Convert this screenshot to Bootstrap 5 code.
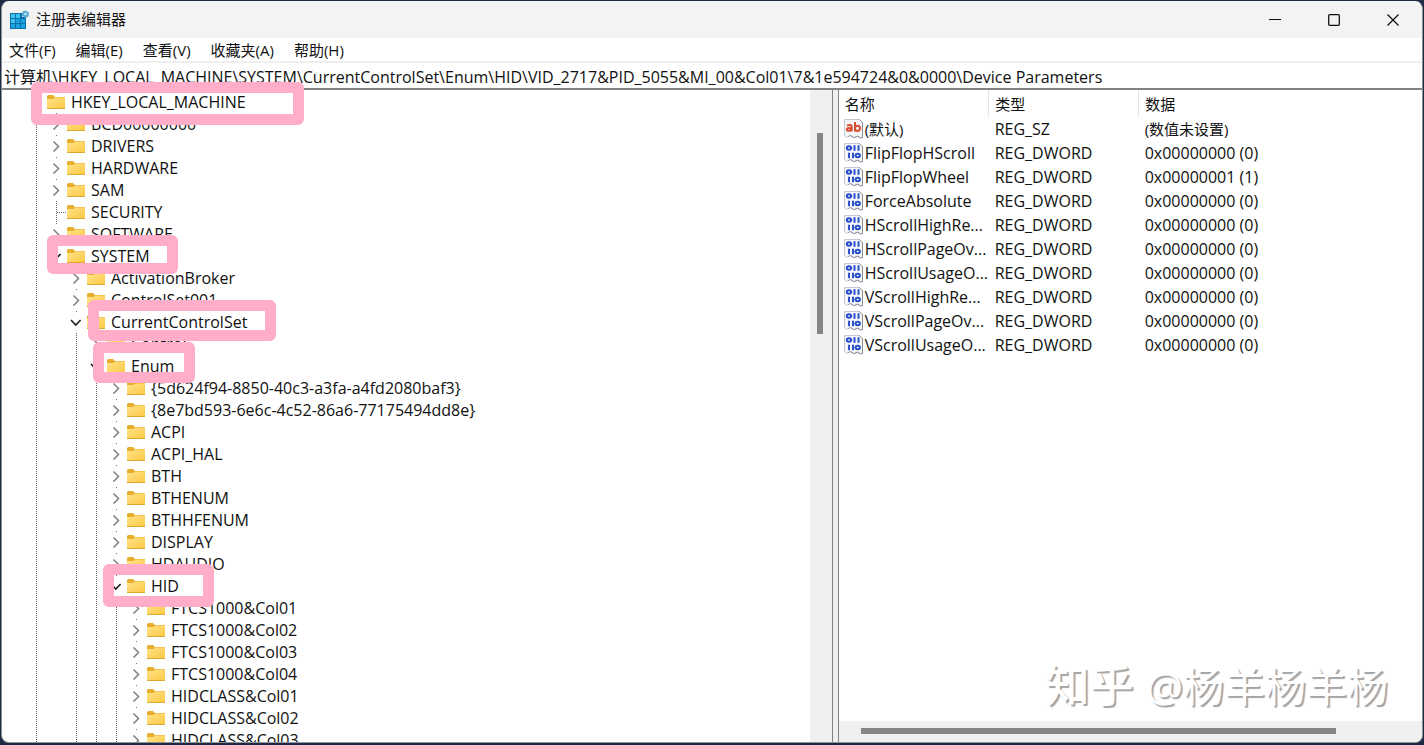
<!DOCTYPE html>
<html lang="zh-CN">
<head>
<meta charset="utf-8">
<meta name="viewport" content="width=device-width, initial-scale=1">
<title>注册表编辑器</title>
<link href="https://cdn.jsdelivr.net/npm/bootstrap@5.3.0/dist/css/bootstrap.min.css" rel="stylesheet">
<style>
  body { font: 16px/22px "Open Sans", "Noto Sans CJK SC", sans-serif; color: #111; background: #1c2a44; }
  .desk { height: 100vh; padding: 1px 1px 2px; }
  .reg-window { background: #fff; border-radius: 8px; overflow: hidden; border: 1px solid #8f9298; border-top-color: #f3f3f3; }
  .cjk { font-size: 15px; }
  .title-bar { height: 36px; background: #f3f3f3; }
  .app-name { padding-left: 6px; line-height: 20px; padding-bottom: 2px; }
  .win-btn { width: 59px; height: 36px; border: 0; background: none; padding: 0; display: grid; place-items: center; }
  .menu-bar { height: 25px; gap: 20px; padding-left: 7px; border-bottom: 2px solid #efefef; }
  .menu-bar a { color: #111; text-decoration: none; }
  .address-bar { height: 27px; border: 0; border-bottom: 2px solid #828282; padding: 0 2px; color: #111; outline: 0; }
  .tree-pane { flex: 0 0 58.5%; border-right: 1px solid #828282; overflow: hidden; }
  .split-bar { flex: 0 0 5px; background: #f0f0f0; }
  .value-pane { flex: 1 1 0; min-width: 0; border-left: 1px solid #828282; }
  .v-track { flex: 0 0 22px; background: #f0f0f0; padding: 43px 9px 0 7px; }
  .v-thumb { height: 201px; background: #858585; }
  .h-track { height: 21px; background: #f0f0f0; padding: 7px 86px 0 22px; }
  .h-thumb { height: 6px; background: #858585; }
  .tree { list-style: none; margin: 0; padding: 1px 0 0 25px; }
  .tree li { display: flex; align-items: center; height: 22px; white-space: nowrap; }
  .guide { flex: 0 0 20px; height: 22px; display: grid; align-items: center; padding-left: 3px; background-repeat: no-repeat; background-position: 9px 0; background-size: 1px 100%; }
  .guide.rail { background-image: repeating-linear-gradient(#666 0 1px, transparent 1px 2px); }
  .guide.node { background-image: linear-gradient(#777, #777); background-size: 1px 1px; }
  .guide.leaf { background-image: repeating-linear-gradient(#666 0 1px, transparent 1px 2px), repeating-linear-gradient(90deg, #666 0 1px, transparent 1px 2px); background-size: 1px 100%, 9px 1px; background-position: 9px 0, 10px 11px; }
  .folder { flex: 0 0 20px; margin-right: 4px; }
  .frame { position: absolute; border: 11px solid #ffadc8; border-radius: 6px; }
  .frame-hklm { left: 29px; top: 80px; width: 273px; height: 43px; }
  .frame-system { left: 45px; top: 233px; width: 131px; height: 39px; }
  .frame-ccs { left: 86px; top: 298px; width: 188px; height: 41px; }
  .frame-enum { left: 91px; top: 340px; width: 102px; height: 41px; }
  .frame-hid { left: 101px; top: 562px; width: 111px; height: 43px; }
  .values { table-layout: fixed; width: 100%; border-collapse: collapse; }
  .values th { font-weight: 400; height: 27px; padding: 0 6px; border-right: 1px solid #e4e4e4; }
  .values th:last-child { border-right: 0; }
  .values td { height: 24px; padding: 0 6px; white-space: nowrap; }
  .values td:first-child { padding: 0 0 0 5px; }
  .values svg { margin-right: 2px; flex: none; }
  .watermark { right: 34px; bottom: 26px; font-size: 41px; line-height: 60px; color: #fff; text-shadow: 2px 2px 1px #a4a4a4; }
  .watermark b { font-size: 44px; font-weight: 500; margin-right: 2px; }
</style>
</head>
<body>
<svg width="0" height="0" class="position-absolute" aria-hidden="true">
  <defs>
    <linearGradient id="fold" x1="0" y1="0" x2="1" y2="1"><stop offset="0" stop-color="#ffe38a"/><stop offset="1" stop-color="#fbc843"/></linearGradient>
    <symbol id="i-folder" viewBox="0 0 20 16">
      <path d="M0 2.500Q0 1 1.500 1H6l2 2h10v4H0z" fill="#e6ae2c"/>
      <path d="M0 5h6.500l1.500-1.500h10V15H0z" fill="url(#fold)"/>
      <path d="M0 14.500h18" stroke="#e0a832"/>
    </symbol>
    <symbol id="i-right" viewBox="0 0 12 12"><path d="M3.500 1.500l5 5-5 5" fill="none" stroke="#858585" stroke-width="1.600"/></symbol>
    <symbol id="i-down" viewBox="0 0 12 12"><path d="M1 4l4.800 5L10.600 4" fill="none" stroke="#222" stroke-width="1.700"/></symbol>
    <symbol id="i-page" viewBox="0 0 19 20">
      <path d="M.5.5h15l3 3v15q-2 1-3.500-.500t-3.500 0-3.500-.500-3.500 0-4-1z" fill="#f4f6fa" stroke="#c3c7cf"/>
      <path d="M15.500.500l3 3v15q-2 1-3.500-.500t-3.500 0-3.500-.500-3.500 0" fill="none" stroke="#868b95"/>
    </symbol>
    <symbol id="i-string" viewBox="0 0 19 20">
      <use href="#i-page"/>
      <g fill="none" stroke="#dc4f30" stroke-width="2"><path d="M3 6.500q4.500-1.500 4.700 1v5M7.500 9q-4.700-.200-4.700 1.500t2.400 1.300q2.300-.500 2.300-1.800M11 3v9.500"/><ellipse cx="13.500" cy="9.300" rx="2.500" ry="2.600"/></g>
    </symbol>
    <symbol id="i-binary" viewBox="0 0 19 20">
      <use href="#i-page"/>
      <g fill="none" stroke="#2a50cc" stroke-width="2"><ellipse cx="5" cy="5" rx="2.200" ry="1.800"/><path d="M10.500 2.200v5.600M14.500 2.200v5.600M5 9.700v5.600M9 9.700v5.600"/><ellipse cx="13.700" cy="12.500" rx="2.200" ry="1.800"/></g>
    </symbol>
  </defs>
</svg>

<div class="desk">
  <main class="reg-window h-100 d-flex flex-column position-relative">
    <header class="title-bar d-flex align-items-center flex-shrink-0">
      <svg class="ms-2" width="20" height="20" viewBox="0 0 20 20" aria-hidden="true">
        <path d="M0 3h12v4h4v12H0z" fill="#0b6fae"/>
        <g fill="#3cc3ee"><path d="M1 4h4v4H1zM6 4h4v4H6zM1 9h4v4H1z"/></g>
        <g fill="#1ba1dc"><path d="M6 9h4v4H6zM11 9h4v4h-4zM1 14h4v4H1zM6 14h4v4H6zM11 14h4v4h-4z"/></g>
        <path d="M15.500.500l3.500 2-.500 4-3.500 1.500-3-2.500.500-4z" fill="#55a9d0"/><circle cx="15.500" cy="4" r="1.300" fill="#c5e9f7"/>
      </svg>
      <span class="cjk app-name me-auto">注册表编辑器</span>
      <button class="win-btn" type="button" aria-label="最小化"><svg width="12" height="12"><path d="M0 5.500h12" stroke="#111"/></svg></button>
      <button class="win-btn" type="button" aria-label="最大化"><svg width="12" height="12"><rect x=".7" y=".7" width="10.600" height="10.600" rx="1" fill="none" stroke="#111" stroke-width="1.300"/></svg></button>
      <button class="win-btn" type="button" aria-label="关闭"><svg width="12" height="12"><path d="M.5.5l11 11M11.500.500l-11 11" stroke="#111" stroke-width="1.300"/></svg></button>
    </header>
    <nav class="menu-bar cjk d-flex align-items-center flex-shrink-0">
      <a href="#">文件(F)</a><a href="#">编辑(E)</a><a href="#">查看(V)</a><a href="#">收藏夹(A)</a><a href="#">帮助(H)</a>
    </nav>
    <input class="address-bar w-100 flex-shrink-0" aria-label="地址" value="计算机\HKEY_LOCAL_MACHINE\SYSTEM\CurrentControlSet\Enum\HID\VID_2717&amp;PID_5055&amp;MI_00&amp;Col01\7&amp;1e594724&amp;0&amp;0000\Device Parameters">
    <div class="d-flex flex-grow-1 overflow-hidden">
      <section class="tree-pane d-flex">
        <ul class="tree flex-grow-1" id="tree"></ul>
        <div class="v-track"><div class="v-thumb"></div></div>
      </section>
      <div class="split-bar"></div>
      <section class="value-pane d-flex flex-column position-relative">
        <table class="values">
          <colgroup><col style="width:150px"><col style="width:150px"><col></colgroup>
          <thead class="cjk"><tr><th>名称</th><th>类型</th><th>数据</th></tr></thead>
          <tbody id="values"></tbody>
        </table>
        <div class="watermark position-absolute"><b>知乎</b> @杨羊杨羊杨</div>
        <div class="h-track mt-auto"><div class="h-thumb"></div></div>
      </section>
    </div>
    <div class="frame frame-hklm"></div>
    <div class="frame frame-system"></div>
    <div class="frame frame-ccs"></div>
    <div class="frame frame-enum"></div>
    <div class="frame frame-hid"></div>
  </main>
</div>

<script>
  // Each key: [ancestor guides ("|" rail, "." blank), state (">" closed, "v" open, "-" leaf, " " none), name]
  const keys = [
    ['', ' ', 'HKEY_LOCAL_MACHINE'],
    ['|', '>', 'BCD00000000'], ['|', '>', 'DRIVERS'], ['|', '>', 'HARDWARE'], ['|', '>', 'SAM'],
    ['|', '-', 'SECURITY'], ['|', '>', 'SOFTWARE'], ['|', 'v', 'SYSTEM'],
    ['|.', '>', 'ActivationBroker'], ['|.', '>', 'ControlSet001'], ['|.', 'v', 'CurrentControlSet'],
    ['|.|', '>', 'Control'], ['|.|', 'v', 'Enum'],
    ['|.||', '>', '{5d624f94-8850-40c3-a3fa-a4fd2080baf3}'], ['|.||', '>', '{8e7bd593-6e6c-4c52-86a6-77175494dd8e}'],
    ['|.||', '>', 'ACPI'], ['|.||', '>', 'ACPI_HAL'], ['|.||', '>', 'BTH'], ['|.||', '>', 'BTHENUM'],
    ['|.||', '>', 'BTHHFENUM'], ['|.||', '>', 'DISPLAY'], ['|.||', '>', 'HDAUDIO'], ['|.||', 'v', 'HID'],
    ['|.|||', '>', 'FTCS1000&amp;Col01'], ['|.|||', '>', 'FTCS1000&amp;Col02'], ['|.|||', '>', 'FTCS1000&amp;Col03'],
    ['|.|||', '>', 'FTCS1000&amp;Col04'], ['|.|||', '>', 'HIDCLASS&amp;Col01'], ['|.|||', '>', 'HIDCLASS&amp;Col02'],
    ['|.|||', '>', 'HIDCLASS&amp;Col03']
  ];
  const arrow = id => `<span class="guide node"><svg width="12" height="12"><use href="#${id}"/></svg></span>`;
  const state = { '>': arrow('i-right'), 'v': arrow('i-down'), '-': '<span class="guide leaf"></span>', ' ': '<span class="guide"></span>' };
  document.getElementById('tree').innerHTML = keys.map(([rails, s, name]) =>
    '<li>' + [...rails].map(r => `<span class="guide${r === '|' ? ' rail' : ''}"></span>`).join('') + state[s] +
    `<svg class="folder" width="20" height="16"><use href="#i-folder"/></svg><span>${name}</span></li>`).join('');

  const dword = '0x00000000 (0)';
  const values = [
    ['(默认)', 'REG_SZ', '(数值未设置)'], ['FlipFlopHScroll', 'REG_DWORD', dword], ['FlipFlopWheel', 'REG_DWORD', '0x00000001 (1)'],
    ['ForceAbsolute', 'REG_DWORD', dword], ['HScrollHighRe...', 'REG_DWORD', dword], ['HScrollPageOv...', 'REG_DWORD', dword],
    ['HScrollUsageO...', 'REG_DWORD', dword], ['VScrollHighRe...', 'REG_DWORD', dword], ['VScrollPageOv...', 'REG_DWORD', dword],
    ['VScrollUsageO...', 'REG_DWORD', dword]
  ];
  document.getElementById('values').innerHTML = values.map(([n, t, d]) => {
    const text = t === 'REG_SZ', c = text ? ' class="cjk"' : '';
    return `<tr><td><div class="d-flex align-items-center"><svg width="19" height="20"><use href="#${text ? 'i-string' : 'i-binary'}"/></svg><span${c}>${n}</span></div></td><td>${t}</td><td${c}>${d}</td></tr>`;
  }).join('');
</script>
<script src="https://cdn.jsdelivr.net/npm/bootstrap@5.3.0/dist/js/bootstrap.bundle.min.js"></script>
</body>
</html>
